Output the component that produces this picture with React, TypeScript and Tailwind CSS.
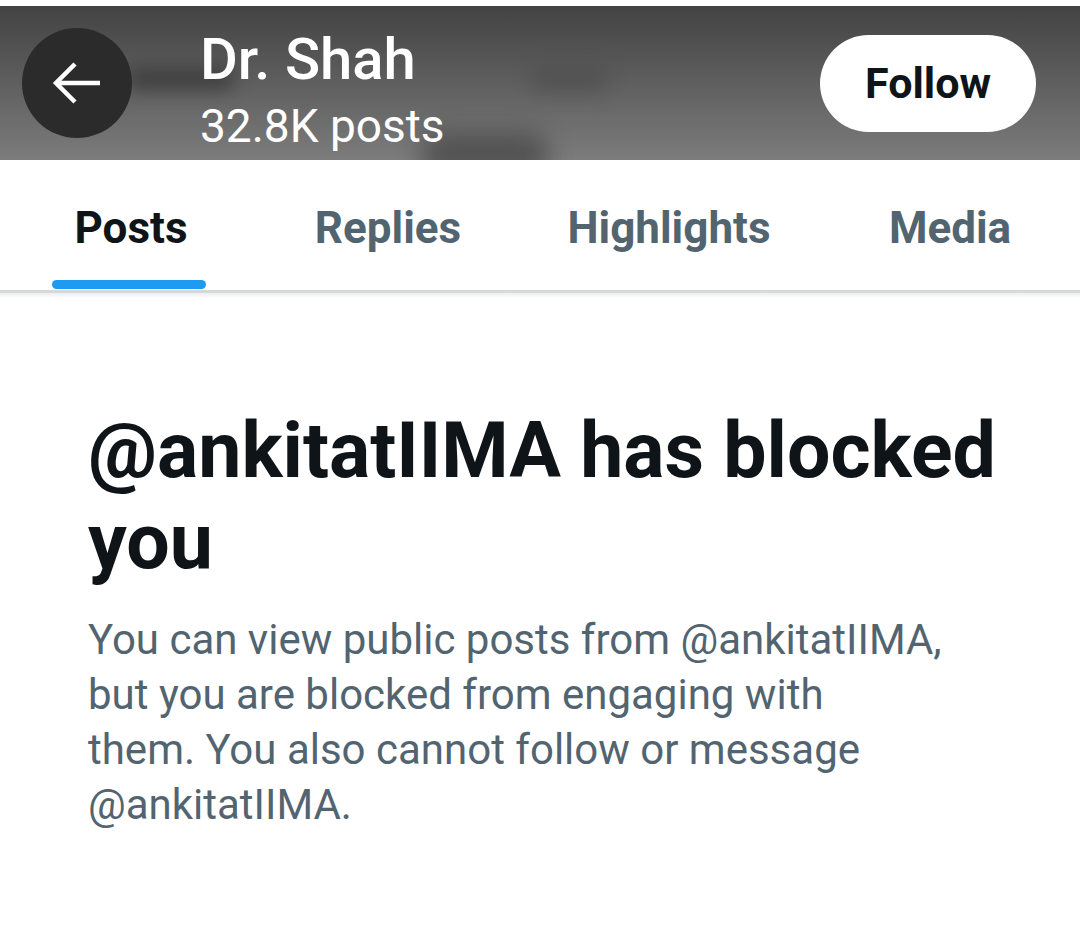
import React from "react";

const font = { fontFamily: "Roboto, 'Liberation Sans', sans-serif" };

function BackArrow() {
  return (
    <svg width="52" height="44" viewBox="0 0 52 44" fill="none">
      <path d="M49 22H5M24 3L5 22l19 19" stroke="white" strokeWidth="4.5" strokeLinecap="butt" strokeLinejoin="miter" />
    </svg>
  );
}

export default function App() {
  const tabs = [
    { label: "Posts", w: "w-[262px]", active: true },
    { label: "Replies", w: "w-[252px]", active: false },
    { label: "Highlights", w: "w-[310px]", active: false },
    { label: "Media", w: "w-[252px]", active: false },
  ];
  return (
    <div className="w-[1080px] h-[942px] bg-white overflow-hidden" style={font}>
      <div className="h-[6px] bg-white" />
      <div className="relative h-[154px] bg-gradient-to-b from-[#434343] to-[#7c7c7c] overflow-hidden">
        <div className="absolute left-[125px] top-[62px] w-[110px] h-[22px] rounded-full bg-[#333] blur-[9px] opacity-70" />
        <div className="absolute left-[420px] top-[125px] w-[130px] h-[50px] rounded-full bg-[#444] blur-[12px] opacity-70" />
        <div className="absolute left-[530px] top-[60px] w-[80px] h-[26px] rounded-full bg-[#4b4b4b] blur-[10px] opacity-60" />
        <div className="relative flex items-center h-full pl-[22px] pr-[44px]">
          <div className="w-[110px] h-[110px] rounded-full bg-[#2b2b2b] flex items-center justify-center">
            <BackArrow />
          </div>
          <div className="ml-[68px] self-start mt-[21px] flex flex-col text-white">
            <div className="text-[58px] leading-[64px] font-medium">Dr. Shah</div>
            <div className="text-[46px] leading-[70px] font-normal">32.8K posts</div>
          </div>
          <div className="ml-auto w-[216px] h-[97px] rounded-full bg-white flex items-center justify-center">
            <span className="text-[43px] font-bold text-[#0f1419]">Follow</span>
          </div>
        </div>
      </div>
      <div className="flex h-[130px]">
        {tabs.map((t) => (
          <div key={t.label} className={`${t.w} flex flex-col items-center`}>
            <div className="flex-1 flex items-center pt-[16px]">
              <span className={`text-[44px] font-bold ${t.active ? "text-[#0f1419]" : "text-[#536471]"}`}>{t.label}</span>
            </div>
            <div className={`h-[9px] w-[154px] rounded-full mb-[1px] mr-[4px] ${t.active ? "bg-[#1d9bf0]" : "bg-transparent"}`} />
          </div>
        ))}
      </div>
      <div className="h-[3px] bg-[#d6d8da]" />
      <div className="h-[5px] bg-gradient-to-b from-[#eceeef] to-white" />
      <div className="pl-[88px] pr-[40px] pt-[108px]">
        <h1 className="text-[77px] leading-[91px] font-bold text-[#0f1419]">
          @ankitatIIMA has blocked you
        </h1>
        <p className="mt-[24px] text-[42px] leading-[55px] text-[#536471]">
          You can view public posts from @ankitatIIMA,
          <br />
          but you are blocked from engaging with
          <br />
          them. You also cannot follow or message
          <br />
          @ankitatIIMA.
        </p>
      </div>
    </div>
  );
}
